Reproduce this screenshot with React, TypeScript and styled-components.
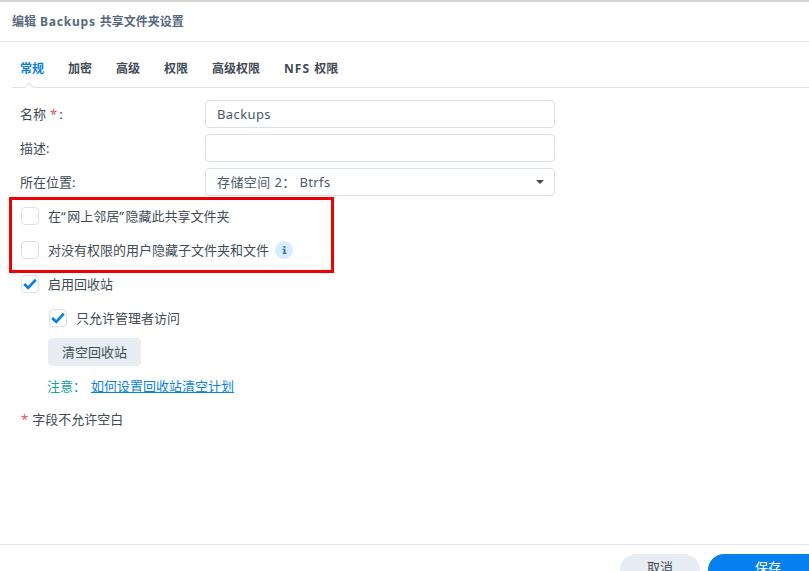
import React from "react";
import styled, { createGlobalStyle } from "styled-components";

const Global = createGlobalStyle`
  html, body { margin: 0; padding: 0; height: 100%; overflow: hidden; background: #fff; }
  body { font-family: "Noto Sans", "Noto Sans CJK SC", sans-serif; font-size: 13px; color: #414b55; }
`;
const Dialog = styled.div`
  position: relative; width: 809px; height: 571px; overflow: hidden; background: #fff;
  border-top: 2px solid #d3d3d3; box-sizing: border-box; display: flex; flex-direction: column;
`;
const Header = styled.div`
  height: 40px; flex: none; box-sizing: border-box; border-bottom: 1px solid #e3e8ee;
  padding: 0 0 2px 12px; display: flex; align-items: center; white-space: pre;
  font-size: 12px; font-weight: 700; color: #57697d;
`;
const WideLatin = styled.span<{ $spacing: number }>`
  letter-spacing: ${p => p.$spacing}px; white-space: pre;
`;
const Tabs = styled.div`
  position: relative; margin: 13px 0 0 12px; height: 33px; flex: none; box-sizing: border-box;
  border-bottom: 1px solid #dce3ea; display: flex; gap: 24px; padding-left: 8px; align-items: flex-start;
`;
const Tab = styled.div<{ $active?: boolean }>`
  line-height: 28px; font-size: 12px; font-weight: 700;
  color: ${p => (p.$active ? "#0a7fe0" : "#414b55")};
`;
const Notch = styled.span`
  position: absolute; left: 13px; bottom: -1px; width: 8px; height: 8px; background: #fff;
  border-left: 1px solid #dce3ea; border-top: 1px solid #dce3ea;
  transform: translateY(4px) rotate(45deg); box-sizing: border-box;
`;
const Form = styled.div`
  padding: 12px 0 0 20px; display: flex; flex-direction: column; flex: 1;
`;
const FieldRow = styled.div`
  display: grid; grid-template-columns: 185px 350px; height: 28px; margin-bottom: 6px; align-items: center;
`;
const Label = styled.span`font-size: 13px; padding-bottom: 2px;`;
const Star = styled.span`color: #f0475a; margin: 0 2px 0 4px;`;
const Input = styled.div<{ $select?: boolean }>`
  height: 28px; box-sizing: border-box; border: 1px solid #d8e1ea; border-radius: 4px;
  padding: 0 11px ${p => (p.$select ? "2px" : "0")}; display: flex; align-items: center; justify-content: space-between;
  font-size: 13px; letter-spacing: 0.4px; color: #485a6e;
`;
const Arrow = styled.span`
  width: 0; height: 0; border-left: 4.5px solid transparent; border-right: 4.5px solid transparent;
  border-top: 4px solid #414b55; margin-right: -1px; margin-top: 2px;
`;
const Spacer = styled.div`height: 5px; flex: none;`;
const CheckRow = styled.div<{ $nested?: boolean }>`
  display: flex; align-items: center; height: 18px; margin-bottom: 16px; margin-left: ${p => (p.$nested ? 29 : 1)}px;
  font-size: 13px; gap: 9px;
`;
const CheckText = styled.span`padding-bottom: 2px;`;
const Quote = styled.span`letter-spacing: 1.5px;`;
const Box = styled.span`
  width: 18px; height: 18px; box-sizing: border-box; border: 1px solid #d8e1ea; border-radius: 4px;
  display: flex; align-items: center; justify-content: center; background: #fff; flex: none;
`;
const Info = styled.span`
  width: 18px; height: 18px; border-radius: 50%; background: #d9ebfd; display: flex;
  align-items: center; justify-content: center; margin-left: -3px;
`;
const ClearButton = styled.div`
  margin: -5px 0 0 28px; width: 93px; height: 28px; background: #e8ecf3; border-radius: 4px; padding-bottom: 1px; box-sizing: border-box;
  display: flex; align-items: center; justify-content: center; font-size: 13px;
`;
const Note = styled.div`
  margin: 11px 0 0 27px; height: 18px; line-height: 18px; display: flex; gap: 5px; font-size: 13px;
`;
const NoteLabel = styled.span`color: #10a59a;`;
const Link = styled.a`color: #0a7fe8; text-decoration: underline;`;
const Required = styled.div`
  margin: 16px 0 0 1px; height: 18px; line-height: 16px; display: flex; gap: 4px; font-size: 13px;
`;
const RequiredStar = styled.span`color: #f0475a;`;
const Footer = styled.div`
  flex: none; height: 27px; box-sizing: border-box; border-top: 1px solid #e3e8ee;
  display: flex; justify-content: flex-end; gap: 8px; padding-top: 9px; overflow: visible;
`;
const Pill = styled.div<{ $primary?: boolean }>`
  width: ${p => (p.$primary ? "120px" : "80px")}; height: 32px; border-radius: 16px; flex: none;
  margin-right: ${p => (p.$primary ? "-19px" : "0")};
  background: ${p => (p.$primary ? "#0580ee" : "#e8ecf3")};
  color: ${p => (p.$primary ? "#fff" : "#414b55")};
  font-size: 13px; text-align: center; line-height: 26px;
`;
const Highlight = styled.div`
  position: absolute; left: 9px; top: 195px; width: 325px; height: 76px; box-sizing: border-box;
  border: 3px solid #f00000;
`;

const Check = () => (
  <svg width="14" height="12" viewBox="0 0 14 12" fill="none">
    <path d="M1.2 6 L5.2 9.8 L12.8 1.6" stroke="#0a7fe8" strokeWidth="2.7" />
  </svg>
);
const InfoGlyph = () => (
  <svg width="5" height="8" viewBox="0 0 5 8" fill="#1a78d2">
    <rect x="1.4" y="0" width="2" height="1.8" />
    <path d="M0.6 2.8 H3.4 V6.8 H4.4 V8 H0.6 V6.8 H1.6 V4 H0.6 Z" />
  </svg>
);

export default function App() {
  return (
    <>
      <Global />
      <Dialog>
        <Header>
          <span>编辑<WideLatin $spacing={0.8}> Backups </WideLatin>共享文件夹设置</span>
        </Header>
        <Tabs>
          <Tab $active>常规</Tab>
          <Tab>加密</Tab>
          <Tab>高级</Tab>
          <Tab>权限</Tab>
          <Tab>高级权限</Tab>
          <Tab><WideLatin $spacing={1}>NFS </WideLatin>权限</Tab>
          <Notch />
        </Tabs>
        <Form>
          <FieldRow>
            <Label>名称<Star>*</Star>:</Label>
            <Input>Backups</Input>
          </FieldRow>
          <FieldRow>
            <Label>描述:</Label>
            <Input />
          </FieldRow>
          <FieldRow>
            <Label>所在位置:</Label>
            <Input $select>存储空间 2：&nbsp;Btrfs<Arrow /></Input>
          </FieldRow>
          <Spacer />
          <CheckRow><Box /><CheckText>在<Quote>“</Quote>网上邻居<Quote>”</Quote>隐藏此共享文件夹</CheckText></CheckRow>
          <CheckRow><Box /><CheckText>对没有权限的用户隐藏子文件夹和文件</CheckText><Info><InfoGlyph /></Info></CheckRow>
          <CheckRow><Box><Check /></Box><CheckText>启用回收站</CheckText></CheckRow>
          <CheckRow $nested><Box><Check /></Box><CheckText>只允许管理者访问</CheckText></CheckRow>
          <ClearButton>清空回收站</ClearButton>
          <Note><NoteLabel>注意：</NoteLabel><Link>如何设置回收站清空计划</Link></Note>
          <Required><RequiredStar>*</RequiredStar>字段不允许空白</Required>
        </Form>
        <Footer>
          <Pill>取消</Pill>
          <Pill $primary>保存</Pill>
        </Footer>
        <Highlight />
      </Dialog>
    </>
  );
}
